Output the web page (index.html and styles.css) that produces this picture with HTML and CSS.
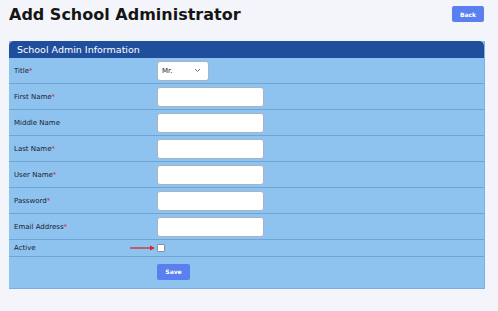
FILE: index.html
```html
<!DOCTYPE html>
<html lang="en">
<head>
    <meta charset="UTF-8">
    <meta name="viewport" content="width=device-width, initial-scale=1.0">
    <title>Add School Administrator</title>
    <link rel="stylesheet" href="styles.css">
</head>
<body>
    <div class="page-header">
        <h1>Add School Administrator</h1>
        <button class="back">Back</button>
    </div>

    <div class="panel">
        <div class="panel-header">School Admin Information</div>

        <div class="form-row">
            <label>Title<span class="req">*</span></label>
            <div class="field">
                <div class="select">
                    <span>Mr.</span>
                    <svg width="7" height="5" viewBox="0 0 7 5"><path d="M1 1 L3.5 3.5 L6 1" fill="none" stroke="#777" stroke-width="1"/></svg>
                </div>
            </div>
        </div>
        <div class="form-row">
            <label>First Name<span class="req">*</span></label>
            <div class="field"><input type="text"></div>
        </div>
        <div class="form-row">
            <label>Middle Name</label>
            <div class="field"><input type="text"></div>
        </div>
        <div class="form-row">
            <label>Last Name<span class="req">*</span></label>
            <div class="field"><input type="text"></div>
        </div>
        <div class="form-row">
            <label>User Name<span class="req">*</span></label>
            <div class="field"><input type="text"></div>
        </div>
        <div class="form-row">
            <label>Password<span class="req">*</span></label>
            <div class="field"><input type="password"></div>
        </div>
        <div class="form-row">
            <label>Email Address<span class="req">*</span></label>
            <div class="field"><input type="text"></div>
        </div>
        <div class="form-row short">
            <label>Active</label>
            <div class="field">
                <svg class="arrow" width="26" height="6" viewBox="0 0 26 6"><path d="M0 3 H21" stroke="#d42a2a" stroke-width="1.3"/><path d="M20 0.5 L25 3 L20 5.5 Z" fill="#d42a2a"/></svg>
                <span class="checkbox"></span>
            </div>
        </div>
        <div class="form-row last">
            <label></label>
            <div class="field"><button class="save">Save</button></div>
        </div>
    </div>
</body>
</html>
```

FILE: styles.css
```css
body {
    margin: 0;
    background-color: #f4f5fa;
    font-family: "DejaVu Sans", sans-serif;
    color: #1b1b1b;
}

.page-header {
    display: flex;
    justify-content: space-between;
    align-items: flex-start;
    padding: 3px 14px 0 9px;
    height: 38px;
}

.page-header h1 {
    margin: 0;
    font-size: 16px;
    font-weight: bold;
    line-height: 24px;
    color: #151515;
}

.back {
    margin-top: 3px;
    width: 32px;
    height: 16px;
    padding: 0;
    border: none;
    border-radius: 2px;
    background-color: #5a80f0;
    color: #fff;
    font-family: inherit;
    font-size: 6px;
    font-weight: bold;
}

.panel {
    margin: 0 13px 0 9px;
    background-color: #8ec3ef;
    border-bottom: 1px solid #7aaee0;
    border-right: 1px solid #7fb2e2;
}

.panel-header {
    height: 17px;
    line-height: 17px;
    padding-left: 8px;
    background-color: #1f4f9c;
    border-radius: 5px 5px 0 0;
    color: #fff;
    font-size: 9.5px;
}

.form-row {
    display: grid;
    grid-template-columns: 148px 1fr;
    align-items: center;
    height: 25px;
    border-bottom: 1px solid #6fa5d6;
}

.form-row:first-of-type {
    height: 24px;
}

.form-row.short {
    height: 16px;
}

.form-row.last {
    height: 31px;
    border-bottom: none;
}

.form-row label {
    padding-left: 5px;
    font-size: 7px;
    color: #18212e;
}

.req {
    color: #d8283a;
}

.field {
    display: flex;
    align-items: center;
}

.field input {
    box-sizing: border-box;
    width: 107px;
    height: 20px;
    margin: 0;
    border: 1px solid #a9b4c2;
    border-radius: 3px;
    background-color: #fff;
}

.select {
    box-sizing: border-box;
    display: flex;
    justify-content: space-between;
    align-items: center;
    width: 52px;
    height: 20px;
    padding: 0 7px 0 4px;
    border: 1px solid #a9b4c2;
    border-radius: 3px;
    background-color: #fff;
    font-size: 7px;
}

.arrow {
    margin-left: -27px;
    margin-right: 1px;
}

.checkbox {
    box-sizing: border-box;
    width: 8px;
    height: 8px;
    border: 1px solid #8a8f99;
    border-radius: 1px;
    background-color: #fff;
}

.save {
    margin-top: -2px;
    width: 33px;
    height: 16px;
    padding: 0;
    border: none;
    border-radius: 2px;
    background-color: #5a80f0;
    color: #fff;
    font-family: inherit;
    font-size: 6px;
    font-weight: bold;
}
```
